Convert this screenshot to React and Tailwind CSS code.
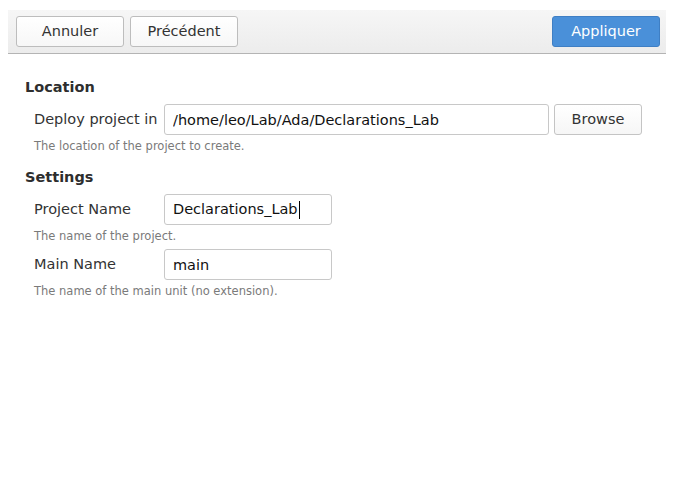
export default function App() {
  const font = { fontFamily: '"DejaVu Sans", "Liberation Sans", sans-serif' }
  const btn =
    'h-[31px] w-[108px] rounded-[3px] border border-[#bdbdbd] bg-gradient-to-b from-white to-[#f7f7f7] text-[14.5px] text-[#333]'
  const input =
    'h-[31px] rounded-[3px] border border-[#c8c8c8] bg-white px-2 text-[14.5px] text-[#111] outline-none'

  return (
    <div className="h-[490px] w-[676px] bg-white" style={font}>
      <div className="pl-[8px] pr-[10px] pt-[10px]">
        <div className="flex h-[44px] items-center justify-between border-b border-[#b4b4b4] bg-gradient-to-b from-[#f6f6f6] to-[#ececec] pl-[8px] pr-[6px]">
          <div className="flex gap-[6px]">
            <button type="button" className={btn}>
              Annuler
            </button>
            <button type="button" className={btn}>
              Précédent
            </button>
          </div>
          <button
            type="button"
            className="h-[31px] w-[108px] rounded-[3px] border border-[#3f7fc4] bg-[#4a90d9] text-[14.5px] text-white"
          >
            Appliquer
          </button>
        </div>
      </div>

      <div className="pl-[25px] pt-[24px]">
        <h2 className="text-[14.5px] font-bold leading-[18px] text-[#2e2e2e]">Location</h2>
        <div className="mt-[8px] pl-[9px]">
          <div className="flex items-center">
            <span className="w-[130px] text-[14.5px] text-[#333]">Deploy project in</span>
            <input className={`${input} w-[385px]`} defaultValue="/home/leo/Lab/Ada/Declarations_Lab" readOnly />
            <button
              type="button"
              className="ml-[5px] h-[31px] w-[88px] rounded-[3px] border border-[#c4c4c4] bg-gradient-to-b from-white to-[#f6f6f6] text-[14.5px] text-[#333]"
            >
              Browse
            </button>
          </div>
          <p className="mt-[4px] text-[11.5px] leading-[14px] text-[#7a7a7a]">The location of the project to create.</p>
        </div>

        <h2 className="mt-[15px] text-[14.5px] font-bold leading-[18px] text-[#2e2e2e]">Settings</h2>
        <div className="mt-[8px] pl-[9px]">
          <div className="flex items-center">
            <span className="w-[130px] text-[14.5px] text-[#333]">Project Name</span>
            <div className={`${input} flex w-[168px] items-center`}>
              <span>Declarations_Lab</span>
              <span className="ml-[1px] h-[18px] w-px bg-black" />
            </div>
          </div>
          <p className="mt-[4px] text-[11.5px] leading-[14px] text-[#7a7a7a]">The name of the project.</p>
          <div className="mt-[6px] flex items-center">
            <span className="w-[130px] text-[14.5px] text-[#333]">Main Name</span>
            <input className={`${input} w-[168px]`} defaultValue="main" readOnly />
          </div>
          <p className="mt-[4px] text-[11.5px] leading-[14px] text-[#7a7a7a]">The name of the main unit (no extension).</p>
        </div>
      </div>
    </div>
  )
}
